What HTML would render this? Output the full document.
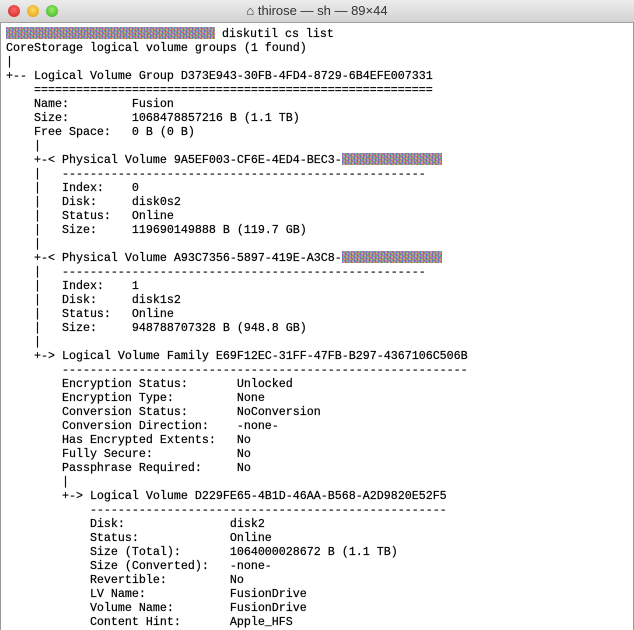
<!DOCTYPE html>
<html><head><meta charset="utf-8"><style>
html,body{margin:0;padding:0;width:634px;height:630px;overflow:hidden;background:#fff}
.tb{position:absolute;left:0;top:0;width:634px;height:23px;background:linear-gradient(#ececec,#d3d3d3);border-bottom:1px solid #a0a0a0;box-sizing:border-box}
.dot{position:absolute;top:5px;width:12px;height:12px;border-radius:50%}
.t{position:absolute;left:0;width:634px;top:3px;text-align:center;font:13px "Liberation Sans",sans-serif;color:#333}
pre{position:absolute;left:6px;top:27px;margin:0;font:11.67px/14px "Liberation Mono",monospace;color:#000;-webkit-text-stroke:0.2px #000}
.n{display:inline-block;height:12px;vertical-align:-2px;background:
repeating-linear-gradient(37deg,rgba(255,0,200,.5) 0 1px,transparent 1px 3px),
repeating-linear-gradient(-61deg,rgba(0,200,80,.6) 0 1px,transparent 1px 4px),
repeating-linear-gradient(90deg,rgba(0,80,255,.4) 0 1px,transparent 1px 3px),
repeating-linear-gradient(0deg,rgba(230,200,0,.5) 0 1px,transparent 1px 3px),#aaa}
.l{position:absolute;left:0;top:22px;width:1px;height:608px;background:#999}
.r{position:absolute;right:0;top:22px;width:1px;height:608px;background:#999}
</style></head><body>
<div class="tb">
<div class="dot" style="left:8px;background:radial-gradient(circle at 50% 40%,#f66,#c22)"></div>
<div class="dot" style="left:27px;background:radial-gradient(circle at 50% 40%,#fd6,#d90)"></div>
<div class="dot" style="left:46px;background:radial-gradient(circle at 50% 40%,#9e6,#3a2)"></div>
<div class="t">⌂ thirose — sh — 89×44</div>
</div>
<div class="l"></div><div class="r"></div>
<pre><span class="n" style="width:209px"></span> diskutil cs list
CoreStorage logical volume groups (1 found)
|
+-- Logical Volume Group D373E943-30FB-4FD4-8729-6B4EFE007331
    =========================================================
    Name:         Fusion
    Size:         1068478857216 B (1.1 TB)
    Free Space:   0 B (0 B)
    |
    +-&lt; Physical Volume 9A5EF003-CF6E-4ED4-BEC3-<span class="n" style="width:100px"></span>
    |   ----------------------------------------------------
    |   Index:    0
    |   Disk:     disk0s2
    |   Status:   Online
    |   Size:     119690149888 B (119.7 GB)
    |
    +-&lt; Physical Volume A93C7356-5897-419E-A3C8-<span class="n" style="width:100px"></span>
    |   ----------------------------------------------------
    |   Index:    1
    |   Disk:     disk1s2
    |   Status:   Online
    |   Size:     948788707328 B (948.8 GB)
    |
    +-&gt; Logical Volume Family E69F12EC-31FF-47FB-B297-4367106C506B
        ----------------------------------------------------------
        Encryption Status:       Unlocked
        Encryption Type:         None
        Conversion Status:       NoConversion
        Conversion Direction:    -none-
        Has Encrypted Extents:   No
        Fully Secure:            No
        Passphrase Required:     No
        |
        +-&gt; Logical Volume D229FE65-4B1D-46AA-B568-A2D9820E52F5
            ---------------------------------------------------
            Disk:               disk2
            Status:             Online
            Size (Total):       1064000028672 B (1.1 TB)
            Size (Converted):   -none-
            Revertible:         No
            LV Name:            FusionDrive
            Volume Name:        FusionDrive
            Content Hint:       Apple_HFS</pre>
</body></html>
